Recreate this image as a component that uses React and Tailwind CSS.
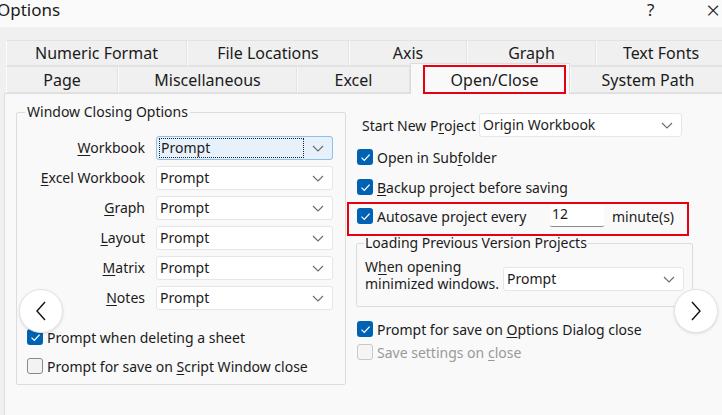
import React from "react";

const Chevron = () => (
  <svg width="12" height="7" viewBox="0 0 12 7" className="shrink-0">
    <path d="M1 1l5 5 5-5" fill="none" stroke="#6b6b6b" strokeWidth="1.1" />
  </svg>
);

const Check = ({ checked = false, disabled = false }) =>
  checked ? (
    <span className="w-[16px] h-[16px] rounded-[3px] bg-[#0062b3] flex items-center justify-center shrink-0">
      <svg width="11" height="9" viewBox="0 0 11 9">
        <path d="M1.5 4.6l2.8 2.8L9.6 1.6" fill="none" stroke="#fff" strokeWidth="1.3" />
      </svg>
    </span>
  ) : (
    <span
      className={
        "w-[16px] h-[16px] rounded-[3px] border shrink-0 " +
        (disabled ? "border-[#c8c8c8] bg-[#f5f5f5]" : "border-[#8a8a8a] bg-[#f3f3f3]")
      }
    />
  );

function Select({ value, width, focused = false }) {
  if (focused) {
    return (
      <div
        className="h-[24px] rounded-[3px] border border-[#8cc0ea] bg-[#e6f1fb] flex items-center pl-[2px] pr-[8px] shrink-0"
        style={{ width }}
      >
        <div className="h-[20px] flex-1 border border-dotted border-[#222] flex items-center pl-[1px] leading-[18px]">
          {value}
        </div>
        <div className="w-[20px] flex justify-end">
          <Chevron />
        </div>
      </div>
    );
  }
  return (
    <div
      className="h-[24px] rounded-[3px] border border-[#e6e6e6] bg-white flex items-center pl-[3px] pr-[8px] justify-between shrink-0"
      style={{ width }}
    >
      <span className="leading-[18px]">{value}</span>
      <Chevron />
    </div>
  );
}

const U = ({ children }) => <span className="underline underline-offset-2 decoration-1">{children}</span>;

const Tab = ({ w, children }) => (
  <div
    className="h-full border border-[#e2e2e2] border-l-[#fbfbfb] bg-[#f0f0f0] flex items-center justify-center shrink-0"
    style={{ width: w }}
  >
    {children}
  </div>
);

const NavBtn = ({ left, dir }) => (
  <div
    className="absolute top-[289px] w-[44px] h-[44px] rounded-full bg-white border border-[#e4e4e4] shadow-[0_1px_3px_rgba(0,0,0,0.12)] flex items-center justify-center z-20"
    style={{ left }}
  >
    <svg width="12" height="20" viewBox="0 0 12 20">
      <path
        d={dir === "left" ? "M10 1L2 10l8 9" : "M2 1l8 9-8 9"}
        fill="none"
        stroke="#111"
        strokeWidth="1.4"
      />
    </svg>
  </div>
);

export default function App() {
  return (
    <div className="relative w-[722px] h-[415px] overflow-hidden bg-[#f0f0f0] text-[#1b1b1b] font-['Noto_Sans','Open_Sans',sans-serif]">
      {/* title bar */}
      <div className="h-[27px] bg-[#fafafa] flex items-start justify-between">
        <span className="ml-[-3px] text-[17px] leading-[20px]">Options</span>
        <div className="flex items-start">
          <span className="text-[17px] leading-[20px] mr-[52px]">?</span>
          <span className="text-[24px] leading-[20px] font-light mr-[2px]">×</span>
        </div>
      </div>

      {/* tabs */}
      <div className="pt-[13px] pl-[6px] text-[16px]">
        <div className="flex h-[26px]">
          <Tab w={181}>Numeric Format</Tab>
          <Tab w={162}>File Locations</Tab>
          <Tab w={118}>Axis</Tab>
          <Tab w={129}>Graph</Tab>
          <Tab w={130}>Text Fonts</Tab>
        </div>
        <div className="flex h-[27px]">
          <Tab w={112}>Page</Tab>
          <Tab w={179}>Miscellaneous</Tab>
          <Tab w={113}>Excel</Tab>
          <div className="relative z-10 -mt-[3px] h-[31px] w-[160px] shrink-0 bg-[#f9f9f9] border-t border-x border-[#dcdcdc] pt-[1px] pl-[12px]">
            <div className="w-[143px] h-[29px] border-2 border-[#e60012] flex items-center justify-center">
              Open/Close
            </div>
          </div>
          <Tab w={156}>System Path</Tab>
        </div>
      </div>

      {/* panel */}
      <div className="ml-[4px] h-[322px] bg-[#f9f9f9] border-t border-l border-[#dedede] flex text-[14px]">
        {/* left group */}
        <fieldset className="ml-[11px] mt-[9px] w-[330px] h-[282px] border border-[#dcdcdc] rounded-[2px] shrink-0">
          <legend className="ml-[8px] px-[2px] leading-[18px]">Window Closing Options</legend>
          <div className="pt-[15px] flex flex-col gap-[6px]">
            {[
              [<><U>W</U>orkbook</>, true],
              [<><U>E</U>xcel Workbook</>, false],
              [<><U>G</U>raph</>, false],
              [<><U>L</U>ayout</>, false],
              [<><U>M</U>atrix</>, false],
              [<><U>N</U>otes</>, false],
            ].map(([label, focused], i) => (
              <div key={i} className="flex items-center h-[24px] gap-[11px]">
                <span className="w-[128px] text-right leading-[18px]">{label}</span>
                <Select value="Prompt" width={177} focused={focused} />
              </div>
            ))}
          </div>
          <div className="mt-[17px] pl-[10px] flex flex-col gap-[9px]">
            <div className="flex items-center gap-[4px] h-[20px]">
              <Check checked />
              <span>Prompt when deleting a sheet</span>
            </div>
            <div className="flex items-center gap-[4px] h-[20px]">
              <Check />
              <span>
                Prompt for save on <U>S</U>cript Window close
              </span>
            </div>
          </div>
        </fieldset>

        {/* right column */}
        <div className="ml-[1px] w-[346px] shrink-0 pt-[19px] flex flex-col">
          <div className="flex items-center h-[24px] pl-[15px] gap-[6px]">
            <span className="w-[111px] whitespace-nowrap">
              Start New P<U>r</U>oject
            </span>
            <Select value="Origin Workbook" width={203} />
          </div>
          <div className="mt-[10px] pl-[10px] flex items-center gap-[4px] h-[20px]">
            <Check checked />
            <span>
              Open in Sub<U>f</U>older
            </span>
          </div>
          <div className="mt-[10px] pl-[10px] flex items-center gap-[4px] h-[20px]">
            <Check checked />
            <span>
              <U>B</U>ackup project before saving
            </span>
          </div>
          <div className="mt-[5px] w-[342px] h-[34px] border-2 border-[#e60012] pl-[8px] pt-[1px]">
            <div className="flex items-center h-[22px]">
              <Check checked />
              <span className="ml-[4px] w-[173px]">Autosave project every</span>
              <div className="w-[54px] h-[22px] bg-white border-b border-[#8a8a8a] rounded-[2px] pl-[2px] leading-[18px]">
                12
              </div>
              <span className="ml-[8px]">minute(s)</span>
            </div>
          </div>
          <fieldset className="-mt-[2px] ml-[9px] w-[337px] border border-[#dcdcdc] rounded-[2px] pb-[14px]">
            <legend className="ml-[7px] px-[1px] leading-[18px]">Loading Previous Version Projects</legend>
            <div className="flex items-start pl-[8px]">
              <div className="w-[138px] mt-[6px] leading-[17px]">
                W<U>h</U>en opening
                <br />
                minimized windows.
              </div>
              <div className="mt-[15px]">
                <Select value="Prompt" width={181} />
              </div>
            </div>
          </fieldset>
          <div className="mt-[12px] pl-[10px] flex items-center gap-[4px] h-[20px]">
            <Check checked />
            <span>
              Prompt for save on <U>O</U>ptions Dialog close
            </span>
          </div>
          <div className="mt-[3px] pl-[10px] flex items-center gap-[4px] h-[20px] text-[#9a9a9a]">
            <Check disabled />
            <span>
              Save settings on <U>c</U>lose
            </span>
          </div>
        </div>
      </div>

      <NavBtn left={19} dir="left" />
      <NavBtn left={674} dir="right" />
    </div>
  );
}
